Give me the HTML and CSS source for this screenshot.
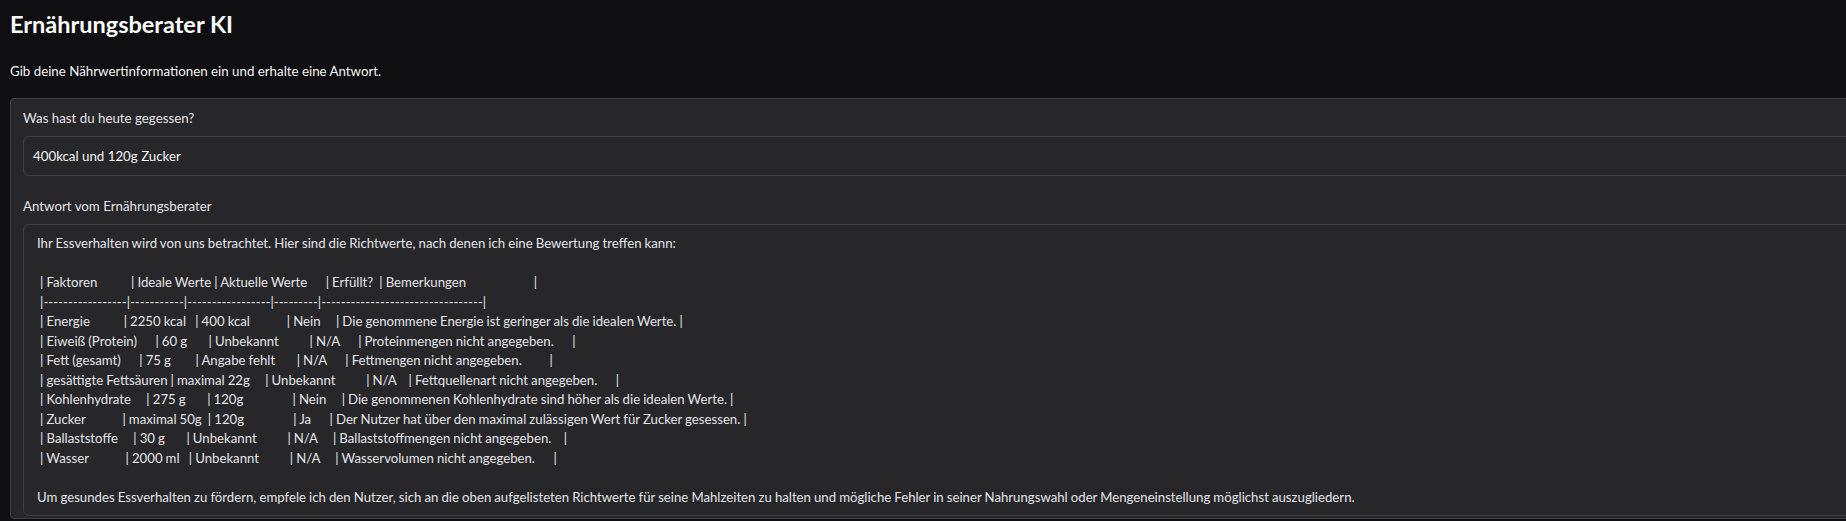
FILE: index.html
```html
<!DOCTYPE html>
<html lang="de">
<head>
<meta charset="utf-8">
<title>Ernährungsberater KI</title>
<link rel="stylesheet" href="styles.css">
</head>
<body>
<div class="app">
  <h1 class="title">Ernährungsberater KI</h1>
  <p class="subtitle">Gib deine Nährwertinformationen ein und erhalte eine Antwort.</p>
  <div class="panel">
    <div class="field">
      <span class="field-label">Was hast du heute gegessen?</span>
      <div class="input">400kcal und 120g Zucker</div>
    </div>
    <div class="field">
      <span class="field-label">Antwort vom Ernährungsberater</span>
      <div class="output">Ihr Essverhalten wird von uns betrachtet. Hier sind die Richtwerte, nach denen ich eine Bewertung treffen kann:

 | Faktoren&#32;&#32;&#32;&#32;&#32;&#32;&#32;&#32;&#32;&#32;&#32;| Ideale Werte | Aktuelle Werte&#32;&#32;&#32;&#32;&#32;&#32;| Erfüllt?&#32;&#32;| Bemerkungen&#32;&#32;&#32;&#32;&#32;&#32;&#32;&#32;&#32;&#32;&#32;&#32;&#32;&#32;&#32;&#32;&#32;&#32;&#32;&#32;&#32;&#32;|
 |&#45;&#45;&#45;&#45;&#45;&#45;&#45;&#45;&#45;&#45;&#45;&#45;&#45;&#45;&#45;&#45;&#45;|&#45;&#45;&#45;&#45;&#45;&#45;&#45;&#45;&#45;&#45;&#45;|&#45;&#45;&#45;&#45;&#45;&#45;&#45;&#45;&#45;&#45;&#45;&#45;&#45;&#45;&#45;&#45;&#45;|&#45;&#45;&#45;&#45;&#45;&#45;&#45;&#45;&#45;|&#45;&#45;&#45;&#45;&#45;&#45;&#45;&#45;&#45;&#45;&#45;&#45;&#45;&#45;&#45;&#45;&#45;&#45;&#45;&#45;&#45;&#45;&#45;&#45;&#45;&#45;&#45;&#45;&#45;&#45;&#45;&#45;&#45;|
 | Energie&#32;&#32;&#32;&#32;&#32;&#32;&#32;&#32;&#32;&#32;&#32;| 2250 kcal&#32;&#32;&#32;| 400 kcal&#32;&#32;&#32;&#32;&#32;&#32;&#32;&#32;&#32;&#32;&#32;&#32;| Nein&#32;&#32;&#32;&#32;&#32;| Die genommene Energie ist geringer als die idealen Werte. |
 | Eiweiß (Protein)&#32;&#32;&#32;&#32;&#32;&#32;| 60 g&#32;&#32;&#32;&#32;&#32;&#32;&#32;| Unbekannt&#32;&#32;&#32;&#32;&#32;&#32;&#32;&#32;&#32;&#32;| N/A&#32;&#32;&#32;&#32;&#32;&#32;| Proteinmengen nicht angegeben.&#32;&#32;&#32;&#32;&#32;&#32;|
 | Fett (gesamt)&#32;&#32;&#32;&#32;&#32;&#32;| 75 g&#32;&#32;&#32;&#32;&#32;&#32;&#32;&#32;| Angabe fehlt&#32;&#32;&#32;&#32;&#32;&#32;&#32;| N/A&#32;&#32;&#32;&#32;&#32;&#32;| Fettmengen nicht angegeben.&#32;&#32;&#32;&#32;&#32;&#32;&#32;&#32;&#32;|
 | gesättigte Fettsäuren | maximal 22g&#32;&#32;&#32;&#32;&#32;| Unbekannt&#32;&#32;&#32;&#32;&#32;&#32;&#32;&#32;&#32;&#32;| N/A&#32;&#32;&#32;&#32;| Fettquellenart nicht angegeben.&#32;&#32;&#32;&#32;&#32;&#32;|
 | Kohlenhydrate&#32;&#32;&#32;&#32;&#32;| 275 g&#32;&#32;&#32;&#32;&#32;&#32;&#32;| 120g&#32;&#32;&#32;&#32;&#32;&#32;&#32;&#32;&#32;&#32;&#32;&#32;&#32;&#32;&#32;&#32;| Nein&#32;&#32;&#32;&#32;&#32;| Die genommenen Kohlenhydrate sind höher als die idealen Werte. |
 | Zucker&#32;&#32;&#32;&#32;&#32;&#32;&#32;&#32;&#32;&#32;&#32;&#32;| maximal 50g&#32;&#32;| 120g&#32;&#32;&#32;&#32;&#32;&#32;&#32;&#32;&#32;&#32;&#32;&#32;&#32;&#32;&#32;&#32;| Ja&#32;&#32;&#32;&#32;&#32;&#32;| Der Nutzer hat über den maximal zulässigen Wert für Zucker gesessen. |
 | Ballaststoffe&#32;&#32;&#32;&#32;&#32;| 30 g&#32;&#32;&#32;&#32;&#32;&#32;&#32;| Unbekannt&#32;&#32;&#32;&#32;&#32;&#32;&#32;&#32;&#32;&#32;| N/A&#32;&#32;&#32;&#32;&#32;| Ballaststoffmengen nicht angegeben.&#32;&#32;&#32;&#32;|
 | Wasser&#32;&#32;&#32;&#32;&#32;&#32;&#32;&#32;&#32;&#32;&#32;&#32;| 2000 ml&#32;&#32;&#32;| Unbekannt&#32;&#32;&#32;&#32;&#32;&#32;&#32;&#32;&#32;&#32;| N/A&#32;&#32;&#32;&#32;&#32;| Wasservolumen nicht angegeben.&#32;&#32;&#32;&#32;&#32;&#32;|

Um gesundes Essverhalten zu fördern, empfele ich den Nutzer, sich an die oben aufgelisteten Richtwerte für seine Mahlzeiten zu halten und mögliche Fehler in seiner Nahrungswahl oder Mengeneinstellung möglichst auszugliedern.</div>
    </div>
  </div>
</div>
</body>
</html>
```

FILE: styles.css
```css
html, body {
  margin: 0;
  padding: 0;
  background: #0f0f11;
  overflow: hidden;
}

body {
  font-family: Lato, "Noto Sans", sans-serif;
  color: #f4f4f5;
}

.app {
  width: 1900px;
  box-sizing: border-box;
  padding: 10px 0 0 10px;
}

.title {
  margin: 0;
  font-size: 23.5px;
  line-height: 29px;
  font-weight: 700;
  color: #fafafa;
}

.subtitle {
  margin: 22px 0 0 0;
  font-size: 13.3px;
  line-height: 20px;
  color: #f4f4f5;
}

.panel {
  margin-top: 17px;
  background: #27272a;
  border: 1px solid #3f3f46;
  border-radius: 4px;
  padding: 10px 12px 2px;
}

.field + .field {
  margin-top: 21px;
}

.field-label {
  display: block;
  font-size: 13.3px;
  line-height: 19px;
  color: #e4e4e7;
  margin-bottom: 8px;
}

.input {
  height: 40px;
  box-sizing: border-box;
  border: 1px solid #3f3f46;
  border-radius: 6px;
  padding: 0 9px;
  display: flex;
  align-items: center;
  font-size: 13.3px;
  color: #f4f4f5;
}

.output {
  border: 1px solid #3f3f46;
  border-radius: 6px;
  padding: 9px 14px 8px 13px;
  white-space: pre-wrap;
  font-size: 13.2px;
  line-height: 19.5px;
  word-spacing: -0.3px;
  color: #e4e4e7;
}
```
